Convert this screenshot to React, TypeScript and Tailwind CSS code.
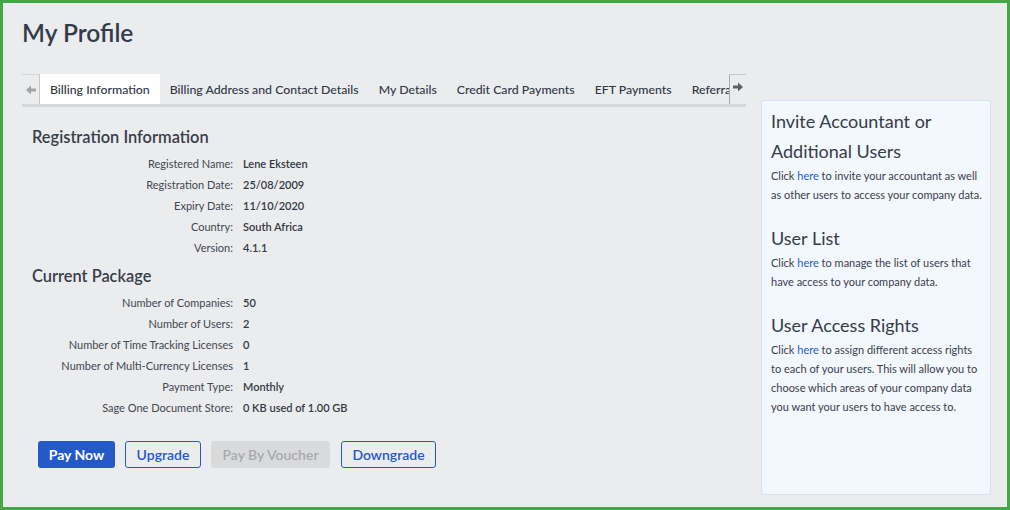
import React from "react";

const regRows: [string, string][] = [
  ["Registered Name:", "Lene Eksteen"],
  ["Registration Date:", "25/08/2009"],
  ["Expiry Date:", "11/10/2020"],
  ["Country:", "South Africa"],
  ["Version:", "4.1.1"],
];

const pkgRows: [string, string][] = [
  ["Number of Companies:", "50"],
  ["Number of Users:", "2"],
  ["Number of Time Tracking Licenses", "0"],
  ["Number of Multi-Currency Licenses", "1"],
  ["Payment Type:", "Monthly"],
  ["Sage One Document Store:", "0 KB used of 1.00 GB"],
];

const tabs = [
  "Billing Information",
  "Billing Address and Contact Details",
  "My Details",
  "Credit Card Payments",
  "EFT Payments",
  "Referrals",
];

function Rows({ rows }: { rows: [string, string][] }) {
  return (
    <div className="flex flex-col">
      {rows.map(([l, v]) => (
        <div key={l} className="flex h-[21px] items-center text-[11px]">
          <div className="w-[211px] shrink-0 text-right text-[#41464f]">{l}</div>
          <div className="pl-[10px] font-semibold text-[#333843]">{v}</div>
        </div>
      ))}
    </div>
  );
}

function Arrow({ dir, color }: { dir: "left" | "right"; color: string }) {
  return (
    <svg width="10" height="10" viewBox="0 0 10 10" className={dir === "left" ? "rotate-180" : ""}>
      <polygon points="0,3.5 5,3.5 5,0.5 10,5 5,9.5 5,6.5 0,6.5" fill={color} />
    </svg>
  );
}

function Here() {
  return <span className="text-[#1f5ccc]">here</span>;
}

function Lines({ lines }: { lines: React.ReactNode[] }) {
  return (
    <p className="text-[11px] leading-[19px] text-[#3b404b]">
      {lines.map((l, i) => (
        <span key={i} className="block whitespace-nowrap">
          {l}
        </span>
      ))}
    </p>
  );
}

export default function App() {
  return (
    <div
      className="box-border h-[510px] w-[1010px] overflow-hidden border-[3px] border-[#44a644] bg-[#ebecee] pl-[19px] pr-[16px] pt-[14px]"
      style={{ fontFamily: "Lato, 'Open Sans', sans-serif" }}
    >
      <h1 className="h-[32px] text-[24.5px] font-semibold leading-[32px] text-[#333b4b]">My Profile</h1>
      <div className="mt-[25px] flex gap-[15px]">
        <div className="w-[724px] shrink-0">
          {/* Tabs */}
          <div className="flex h-[33px] border-b-[3px] border-[#d6d7d9]">
            <div className="flex h-[30px] w-[18px] shrink-0 items-center justify-center border-r border-t border-r-[#c4c5c7] border-t-[#d4d5d7] pt-[1px]">
              <Arrow dir="left" color="#a2a3a5" />
            </div>
            <div className="flex min-w-0 flex-1 overflow-hidden">
              {tabs.map((t, i) => (
                <div
                  key={t}
                  className={
                    i === 0
                      ? "-mb-[3px] flex h-[33px] shrink-0 items-center whitespace-nowrap border-b-[3px] border-[#2459c6] bg-white px-[10px] pt-[3px] text-[12.3px] font-medium text-[#2f3645]"
                      : "-mb-[3px] flex h-[33px] shrink-0 items-center whitespace-nowrap border-b-[3px] border-transparent px-[10px] pt-[3px] text-[12.3px] font-medium text-[#2f3645]"
                  }
                >
                  {t}
                </div>
              ))}
            </div>
            <div className="flex h-[30px] w-[17px] shrink-0 items-start justify-center border-l border-t border-l-[#a9aaac] border-t-[#c4c5c7] pt-[7px]">
              <Arrow dir="right" color="#5f6062" />
            </div>
          </div>

          <div className="pl-[10px]">
            <h2 className="mt-[18px] h-[24px] text-[16.4px] font-semibold leading-[24px] text-[#373d49]">
              Registration Information
            </h2>
            <div className="mt-[5px] -ml-[10px]">
              <Rows rows={regRows} />
            </div>
            <h2 className="mt-[5px] h-[24px] text-[16.4px] font-semibold leading-[24px] text-[#373d49]">
              Current Package
            </h2>
            <div className="mt-[5px] -ml-[10px]">
              <Rows rows={pkgRows} />
            </div>
          </div>

          <div className="mt-[22px] flex gap-[10px] pl-[16px]">
            <button className="h-[27px] w-[77px] rounded-[3px] bg-[#2459c8] text-[14px] font-bold text-white">
              Pay Now
            </button>
            <button className="h-[27px] w-[76px] rounded-[3px] border border-[#2459c8] text-[14px] font-semibold text-[#2459c8]">
              Upgrade
            </button>
            <button className="h-[27px] w-[119px] rounded-[3px] bg-[#d9dadc] text-[14px] font-semibold text-[#a8a9ab]">
              Pay By Voucher
            </button>
            <button className="ml-[1px] h-[27px] w-[95px] rounded-[3px] border border-[#2459c8] text-[14px] font-semibold text-[#2459c8]">
              Downgrade
            </button>
          </div>
        </div>

        <div className="mt-[26px] h-[395px] w-[230px] shrink-0 rounded-[3px] border border-[#d3e2f6] bg-[#f3f7fe] px-[9px] pt-[5px] text-[#363c48]">
          <h3 className="text-[18px] leading-[30px] text-[#363c48]">Invite Accountant or Additional Users</h3>
          <Lines
            lines={[
              <>Click <Here /> to invite your accountant as well</>,
              "as other users to access your company data.",
            ]}
          />
          <h3 className="mt-[19px] text-[18px] leading-[30px] text-[#363c48]">User List</h3>
          <Lines
            lines={[
              <>Click <Here /> to manage the list of users that</>,
              "have access to your company data.",
            ]}
          />
          <h3 className="mt-[19px] text-[18px] leading-[30px] text-[#363c48]">User Access Rights</h3>
          <Lines
            lines={[
              <>Click <Here /> to assign different access rights</>,
              "to each of your users. This will allow you to",
              "choose which areas of your company data",
              "you want your users to have access to.",
            ]}
          />
        </div>
      </div>
    </div>
  );
}
